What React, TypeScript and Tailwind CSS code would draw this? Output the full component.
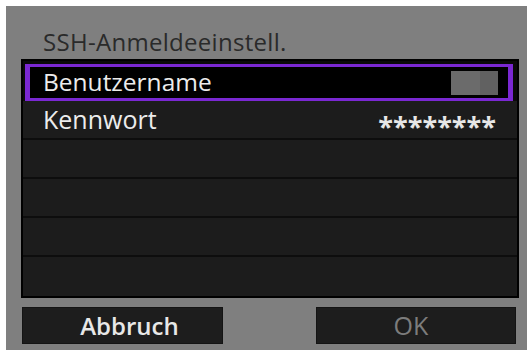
import React from "react";

const font = { fontFamily: '"Open Sans", "Noto Sans", sans-serif' };

const App: React.FC = () => {
  const emptyRows = [0, 1, 2, 3];

  return (
    <div className="w-[532px] h-[354px] bg-white pt-[6px] pl-[6px] pr-[5px] pb-[4px]" style={font}>
      <div className="h-full w-full bg-[#7f7f7f] flex flex-col">
        {/* title */}
        <div className="h-[53px] pt-[22px] pl-[37px] text-[24px] leading-[28px] text-[#2a2a2a] tracking-[0.3px]">
          SSH-Anmeldeeinstell.
        </div>

        {/* list */}
        <div className="ml-[15px] mr-[8px] border-2 border-black bg-[#1c1c1c] flex flex-col">
          <div className="h-[40px] bg-[#0a0a0a] pt-[3px] pl-[2px] pr-[4px]">
            <div className="h-[37px] bg-black border-y-[3px] border-x-[5px] border-[#7a28d2] flex items-center justify-between pl-[13px] pr-[10px]">
              <span className="text-[24.5px] text-[#ececec] font-medium leading-none">Benutzername</span>
              <div className="w-[47px] h-[24px] bg-[#6b6b6b] flex justify-end">
                <div className="w-[18px] h-full bg-[#616161]" />
              </div>
            </div>
          </div>
          <div className="h-[39px] border-b-2 border-[#0d0d0d] flex items-center justify-between pl-[20px] pr-[21px]">
            <span className="text-[25px] text-[#ececec] font-medium leading-none">Kennwort</span>
            <span className="text-[27px] text-[#e6e6e6] font-bold leading-none translate-y-[6px]">
              ********
            </span>
          </div>
          {emptyRows.map((r) => (
            <div
              key={r}
              className={
                r < 3
                  ? "h-[39px] border-b-2 border-[#0d0d0d]"
                  : "h-[39px]"
              }
            />
          ))}
        </div>

        {/* buttons */}
        <div className="flex justify-between mt-[9px] ml-[16px] mr-[11px]">
          <div className="w-[201px] h-[37px] bg-[#1d1d1d] border border-[#141414] flex items-center justify-center pl-[14px]">
            <span className="text-[24px] font-semibold text-[#e8e8e8] leading-none">Abbruch</span>
          </div>
          <div className="w-[200px] h-[37px] bg-[#1d1d1d] border border-[#141414] flex items-center justify-center pr-[10px]">
            <span className="text-[25px] text-[#7c7c7c] leading-none">OK</span>
          </div>
        </div>
      </div>
    </div>
  );
};

export default App;
